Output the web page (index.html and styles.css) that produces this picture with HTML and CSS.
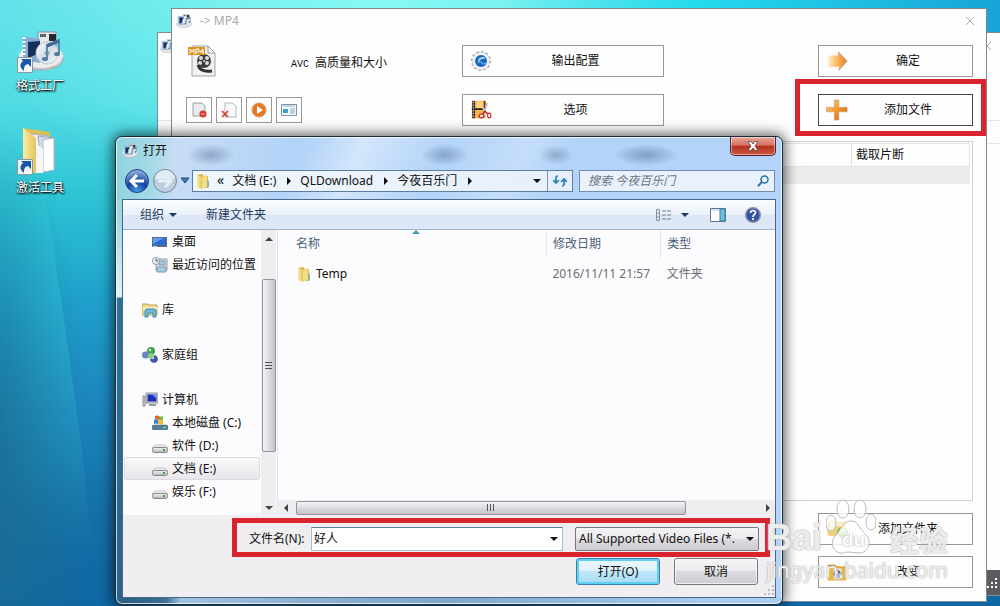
FILE: index.html
```html
<!DOCTYPE html>
<html lang="zh-CN">
<head>
<meta charset="utf-8">
<title>打开</title>
<link rel="stylesheet" href="styles.css">
</head>
<body>
<svg class="defs" aria-hidden="true">
  <defs>
    <linearGradient id="gOrange" x1="0" y1="0" x2="1" y2="1"><stop offset="0" stop-color="#ffd28a"/><stop offset=".6" stop-color="#ee8a1e"/><stop offset="1" stop-color="#b8641c"/></linearGradient>
    <linearGradient id="gArrow" x1="0" y1="0" x2="1" y2="0"><stop offset="0" stop-color="#fff0dc"/><stop offset=".45" stop-color="#ffbb62"/><stop offset="1" stop-color="#e27a18"/></linearGradient>
    <linearGradient id="gFolder" x1="0" y1="0" x2="1" y2="0"><stop offset="0" stop-color="#f9eda5"/><stop offset="1" stop-color="#e3c55a"/></linearGradient>
    <linearGradient id="gDisc" x1="0" y1="0" x2="1" y2="1"><stop offset="0" stop-color="#fff"/><stop offset=".5" stop-color="#d3dbe3"/><stop offset="1" stop-color="#f8fafb"/></linearGradient>
    <linearGradient id="gDrive" x1="0" y1="0" x2="0" y2="1"><stop offset="0" stop-color="#f4f4f4"/><stop offset="1" stop-color="#b4b4b4"/></linearGradient>
  </defs>
  <symbol id="factory" viewBox="0 0 46 40">
    <ellipse cx="23" cy="28" rx="22" ry="11" fill="#c4c6ca" stroke="#a8abb0"/>
    <ellipse cx="23" cy="25" rx="22" ry="12" fill="#ebebec"/>
    <path d="M20 1h18v14H20z" fill="#e6e9eb" stroke="#8a9096"/><path d="M31 3h7v7h-7z" fill="#22282e"/><path d="M22 3h6v3h-6z" fill="#5b636b"/>
    <path d="M5 5l17 3v24L5 29z" fill="#86acd4"/><path d="M10 11l12-1v12l-12 5z" fill="#16305a"/>
    <path d="M6 6v24" stroke="#fff" stroke-width="3" stroke-dasharray="2 2"/>
    <circle cx="29" cy="22" r="11" fill="url(#gDisc)" stroke="#c0c8d0"/><circle cx="29" cy="22" r="2.500" fill="#9aa8b5"/>
    <path d="M29 27V14l12-5v13" fill="none" stroke="#6286ac" stroke-width="2"/><path d="M29 15l12-5" stroke="#436c99" stroke-width="3"/><ellipse cx="27" cy="28" rx="3" ry="2" fill="#4e7aa8"/><ellipse cx="39" cy="23" rx="3" ry="2" fill="#4e7aa8"/>
    <circle cx="35" cy="36" r="1" fill="#c8b140"/>
  </symbol>
  <symbol id="shortcut" viewBox="0 0 16 16"><path d="M.5.5h15v15H.5z" fill="#f4f6f8" stroke="#8a98a5"/><path d="M6 2h8v8l-3-3c-4 1-4 4-4 7-4-3-5-7-1-10l-2-2z" fill="#1857ab"/></symbol>
  <symbol id="folder" viewBox="0 0 16 16"><path d="M2 2l5-1 2 2h4v12H7z" fill="#d9b94e"/><path d="M2 2l5 2v12l-5-2z" fill="url(#gFolder)"/><path d="M7 4l5-2v12l-5 2z" fill="#f3dd83"/><path d="M12 7l2 1v6l-2 1z" fill="#8fb6a0"/></symbol>
  <symbol id="drive" viewBox="0 0 16 16"><path d="M3 7h10l3 3H0z" fill="#ececec" stroke="#b0b0b0" stroke-width=".6"/><rect x=".5" y="9.500" width="15" height="5" rx="2" fill="url(#gDrive)" stroke="#858585"/><path d="M11 11h2v2h-2z" fill="#3ca34a"/></symbol>
</svg>

<div class="desktop">
  <svg class="beam" viewBox="0 0 180 606" preserveAspectRatio="none" aria-hidden="true">
    <defs><linearGradient id="gBeam" x1="0" y1="0" x2="1" y2="0"><stop offset=".2" stop-color="#3fe6e6" stop-opacity="0"/><stop offset="1" stop-color="#3fe0ea" stop-opacity=".4"/></linearGradient>
    <linearGradient id="gFade" x1="0" y1="0" x2="0" y2="1"><stop offset=".1" stop-color="#fff" stop-opacity=".2"/><stop offset=".5" stop-color="#fff"/><stop offset=".92" stop-color="#fff" stop-opacity="0"/></linearGradient>
    <mask id="mBeam"><rect width="180" height="606" fill="url(#gFade)"/></mask></defs>
    <path d="M-30 60L22 60L46 200L64 320L82 450L98 606H20z" fill="url(#gBeam)" mask="url(#mBeam)"/>
  </svg>

  <nav class="shortcuts">
    <a class="shortcut" href="#"><span class="art"><svg class="big" viewBox="0 0 46 40"><use href="#factory"/></svg><svg class="link-mark"><use href="#shortcut"/></svg></span>格式工厂</a>
    <a class="shortcut" href="#"><span class="art"><svg class="big" viewBox="0 0 46 46"><path d="M5 0l27 4v36H12z" fill="#d8bf58"/><path d="M14 6l16 2v32l-12-2z" fill="#f3f3f6" stroke="#aeb2c0"/><path d="M20 8l16 2v32l-12 1z" fill="#d6d9ea" stroke="#a4a8ba"/><path d="M25 12l11-2v32l-11 2z" fill="#fff" stroke="#b4b8c8"/><path d="M5 0l13 10v36L5 38z" fill="url(#gFolder)"/><path d="M18 15l7 6v24l-7 0z" fill="#f6f6f8"/></svg><svg class="link-mark"><use href="#shortcut"/></svg></span>激活工具</a>
  </nav>

  <div class="back-window">
    <div class="back-title"><svg class="i16"><use href="#factory"/></svg><span class="cross"></span></div>
    <div class="back-band"></div>
    <div class="back-status"><svg class="grip" viewBox="0 0 10 10"><path d="M8 0h2v2H8zM8 4h2v2H8zM8 8h2v2H8zM4 4h2v2H4zM4 8h2v2H4zM0 8h2v2H0z" fill="#fff"/></svg></div>
  </div>

  <section class="main-window">
    <header class="main-title"><svg class="i16"><use href="#factory"/></svg><span>-&gt; MP4</span><button class="cross" aria-label="关闭"></button></header>
    <div class="options">
      <div class="profile">
        <svg class="mp4" viewBox="0 0 28 32"><path d="M4 1h16l7 7v23H4z" fill="#f1f1f2" stroke="#a3a3a6"/><path d="M20 1v7h7z" fill="#fff" stroke="#999"/><circle cx="16" cy="16" r="7" fill="#3d3d40"/><g fill="#ddd"><circle cx="13" cy="13" r="2"/><circle cx="19" cy="13" r="2"/><circle cx="12" cy="18" r="2"/><circle cx="19" cy="18" r="2"/><circle cx="16" cy="16" r="1"/></g><path d="M10 20c2 6 7 7 14 6" fill="none" stroke="#333" stroke-width="3"/><path d="M0 2h17v8H0z" fill="#d9941f"/><path d="M2 9V4l2 3 2-3v5M8 9V4h3v3H8M15 9V4l-3 3h4" fill="none" stroke="#fff"/></svg>
        <span class="profile-name"><span class="latin">AVC </span>高质量和大小</span>
      </div>
      <button class="tile"><svg viewBox="0 0 24 24"><circle cx="12" cy="12" r="10" fill="#eceef0" stroke="#a3a8ae" stroke-width="2" stroke-dasharray="2.600 2.600"/><circle cx="12" cy="12" r="9.500" fill="#f0f1f2" stroke="#c9cccf" stroke-width=".6"/><circle cx="12" cy="12" r="6.500" fill="#1766b9"/><path d="M16 8c-6-2-9 3-6 7 0-4 2-6 6-5" fill="#9fd0f6"/><path d="M12 12c0 3 3 4 5 2" fill="none" stroke="#5fa9e4" stroke-width="1.500"/></svg><span>输出配置</span></button>
      <span></span>
      <button class="tile"><svg viewBox="0 0 24 24"><path d="M2 6h11V2l10 10-9 10v-4L2 19z" fill="url(#gArrow)"/><path d="M13 2l10 10-9 10" fill="none" stroke="#c6a58a" stroke-width="1.200"/></svg><span>确定</span></button>
      <div class="tools">
        <button aria-label="移除"><svg viewBox="0 0 16 16"><path d="M2 1h9l3 3v10H2z" fill="#e9eaec" stroke="#9c9fa3"/><circle cx="12" cy="12" r="3.600" fill="#d33e35"/><path d="M10 12h4" stroke="#eeb0a8"/></svg></button>
        <button aria-label="清空"><svg viewBox="0 0 16 16"><path d="M4 1h7l4 3v11H4z" fill="#fafafa" stroke="#b4b7ba"/><path d="M1 9l6 6M7 9l-6 6" stroke="#cf3a2c" stroke-width="1.600"/></svg></button>
        <button aria-label="播放"><svg viewBox="0 0 16 16"><circle cx="8" cy="8" r="7" fill="#e9771d" stroke="#c9a083"/><path d="M6 4l6 4-6 4z" fill="#fff"/></svg></button>
        <button aria-label="信息"><svg viewBox="0 0 16 16"><path d="M.5 2.500h15v11H.5z" fill="#f5f9fb" stroke="#7894a6"/><path d="M2 4h12" stroke="#9bb0bd"/><path d="M2 7h5v4H2z" fill="#3ba3cc"/><path d="M9 7h5M9 9h5M9 11h5" stroke="#93a7b4"/></svg></button>
      </div>
      <button class="tile"><svg viewBox="0 0 24 24"><path d="M2 2h15v19H2z" fill="#f6b448"/><path d="M7 3h7v7H7z" fill="#fbd183"/><path d="M4 2v19" stroke="#2f2927" stroke-width="3"/><path d="M16 2v9" stroke="#5a4030" stroke-width="2"/><path d="M2 11h15" stroke="#2f2927" stroke-width="2"/><path d="M4 3v18" stroke="#fff" stroke-dasharray="1.500 1.500"/><path d="M19 4l-4 12M14 10l6 7" stroke="#c3c6cb" stroke-width="2"/><path d="M16 13l-2 4M16 13l4 4" stroke="#b02434" stroke-width="1.500"/><ellipse cx="12.500" cy="18.500" rx="2.500" ry="2" fill="#fff" stroke="#c72e3c" stroke-width="1.500"/><ellipse cx="21" cy="18" rx="1.800" ry="2.600" fill="#fff" stroke="#c72e3c" stroke-width="1.300"/></svg><span>选项</span></button>
      <span></span>
      <button class="tile active"><svg viewBox="0 0 24 24"><path d="M9 1h5v8h9v5h-9v9H9v-9H0V9h9z" fill="url(#gOrange)" stroke="#bfa38b" stroke-width=".7"/></svg><span>添加文件</span></button>
    </div>
    <div class="queue">
      <table class="queue-table">
        <thead><tr><th class="rest"></th><th>截取片断</th></tr></thead>
        <tbody><tr><td></td><td></td></tr></tbody>
      </table>
    </div>
    <div class="side-actions">
      <button class="tile"><svg viewBox="0 0 24 24"><path d="M2 3h8l2 2h10v14H2z" fill="#eac05c"/><path d="M5 5h15v8H5z" fill="#fbedc6"/><path d="M1 9h21v10H2z" fill="#f2cf79"/><circle cx="18" cy="16" r="6" fill="#61ad48"/><path d="M14 16c2-4 5-4 7-1M20 12v4h-4" fill="none" stroke="#e2f5d5" stroke-width="1.500"/></svg><span>添加文件夹</span></button>
      <button class="tile"><svg viewBox="0 0 24 24"><path d="M2 4h8l2 2h10v15H2z" fill="#cf8b14"/><path d="M2 7h20v14H2z" fill="#f0b53a"/><path d="M8 8h9v12H8z" fill="#dedfe2"/><circle cx="12" cy="14" r="4" fill="#565a60"/><circle cx="15" cy="16" r="3" fill="#a9c1d6"/><path d="M10 11h3v3h-3z" fill="#fff"/></svg><span>改变</span></button>
    </div>
    <div class="mark mark-add"></div>
  </section>

  <section class="dialog" role="dialog" aria-label="打开">
    <header class="dialog-title"><svg class="i16"><use href="#factory"/></svg><h1>打开</h1>
      <button class="close" aria-label="关闭"><svg viewBox="0 0 12 10"><path d="M1 .5h3l2 2.500L8 .5h3L8 5l3 4.500H8L6 7 4 9.500H1L4 5z" fill="#fff" stroke="#5a4348" stroke-width=".8"/></svg></button></header>
    <div class="nav">
      <div class="history">
        <button aria-label="后退"><svg viewBox="0 0 26 26"><defs><radialGradient id="gBack" cx=".5" cy="1" r=".9"><stop offset="0" stop-color="#4aa8ee"/><stop offset=".55" stop-color="#1440a0"/><stop offset="1" stop-color="#7fa6dc"/></radialGradient></defs><circle cx="13" cy="13" r="11.500" fill="url(#gBack)" stroke="#23407a"/><path d="M20 13H8M13 7l-6 6 6 6" fill="none" stroke="#fff" stroke-width="3"/></svg></button>
        <button aria-label="前进"><svg viewBox="0 0 26 26"><circle cx="13" cy="13" r="11.500" fill="#bccddd" stroke="#71879c"/><path d="M3 11a10 9 0 0 1 20 0z" fill="#e2eaf2"/><path d="M6 13h12M13 7l6 6-6 6" fill="none" stroke="#e6edf4" stroke-width="3"/></svg></button>
        <button aria-label="历史记录"><svg class="recent" viewBox="0 0 10 8"><path d="M1 1h8L5 6z" fill="#3b7cc4" stroke="#234a7a"/></svg></button>
      </div>
      <div class="address">
        <svg class="i16"><use href="#folder"/></svg>
        <span class="chev">«</span><button>文档 (E:)</button><i class="tri right"></i><button>QLDownload</button><i class="tri right"></i><button>今夜百乐门</button><i class="tri right"></i>
        <button class="drop" aria-label="展开"><i class="tri down"></i></button>
        <button class="refresh" aria-label="刷新"><svg viewBox="0 0 14 12"><path d="M5 1C2 1 3 4 3 7M0 5l3 3 3-3M9 11c3 0 2-3 2-6M8 7l3-3 3 3" fill="none" stroke="#2a7fae" stroke-width="1.700"/></svg></button>
      </div>
      <label class="search"><input type="text" aria-label="搜索" placeholder="搜索 今夜百乐门"><svg viewBox="0 0 12 12"><circle cx="7.500" cy="4.500" r="3.500" fill="#eaf5fc" stroke="#2a6fa5" stroke-width="1.500"/><path d="M5 7l-4 4" stroke="#2a6fa5" stroke-width="2"/></svg></label>
    </div>

    <div class="client">
      <div class="toolbar">
        <button>组织 <i class="tri down"></i></button><button>新建文件夹</button>
        <button class="view" aria-label="更改视图"><svg viewBox="0 0 16 12"><path d="M.5.5h3v11h-3zM.5 4h3M.5 8h3" fill="none" stroke="#8a929c"/><path d="M6 2h4M11 2h4M6 6h4M11 6h4M6 10h4M11 10h4" stroke="#6e7b8c"/></svg><i class="tri down"></i></button>
        <button aria-label="预览窗格"><svg viewBox="0 0 16 14"><path d="M.5.5h15v13H.5z" fill="#fff" stroke="#5b7893"/><path d="M1 2h9" stroke="#b6cad9"/><path d="M10 1h5v12h-5z" fill="#6fc0e0" stroke="#3d7da4"/></svg></button>
        <button aria-label="帮助"><svg viewBox="0 0 16 16"><circle cx="8" cy="8" r="7.300" fill="#3653a8" stroke="#8992a8" stroke-width="1.400"/><path d="M5.500 6c0-3.500 5-3 5-.3C10.500 7.500 8 7.500 8 10M8 11v2" fill="none" stroke="#fff" stroke-width="1.700"/></svg></button>
      </div>
      <div class="panes">
        <ul class="tree">
          <li class="sub"><svg class="i16"><path d="M0 3h15v10H0z" fill="#5a6c80"/><path d="M1 4h13v7H1z" fill="#286bd0"/><path d="M1 4h11L1 10z" fill="#5d9cf0"/><path d="M1 12h4v1H1z" fill="#8fe0ff"/></svg>桌面</li>
          <li class="sub"><svg class="i16"><path d="M4 2h11v11H4z" fill="#e2e5ea" stroke="#9298a2"/><path d="M7 4h6v4H7zM5 10h9v5H5z" fill="#9fd0e4" stroke="#8295a4"/><circle cx="4" cy="4" r="3.500" fill="#eef2f5" stroke="#8e98a2"/><path d="M4 2v2h2" fill="none" stroke="#456"/></svg>最近访问的位置</li>
          <li class="gap"><svg class="i16"><path d="M0 2h6l1 1h8v10H0z" fill="#efd98a" stroke="#b7a558"/><path d="M1 5h14v3H1z" fill="#f9efbd"/><path d="M3 15V9q0-2 2-2h7q2 0 2 2v6h-3v-4H6v4z" fill="#6cb9dd" stroke="#4689ad"/></svg>库</li>
          <li class="gap"><svg class="i16"><circle cx="9" cy="4" r="4" fill="#3fa14c"/><circle cx="3.500" cy="8" r="3.500" fill="#6a86c4"/><circle cx="12" cy="12" r="3.800" fill="#3c55a6"/><circle cx="9" cy="9" r="3" fill="#86d27a"/><circle cx="8" cy="3" r="1.300" fill="#c3efb8"/><circle cx="11" cy="11" r="1.200" fill="#b5c6ee"/></svg>家庭组</li>
          <li class="gap"><svg class="i16"><path d="M1 4h2v10H1z" fill="#dfe6dd" stroke="#7f8a80"/><path d="M4 1h12v10H4z" fill="#cfd3da" stroke="#8c929c"/><path d="M5.500 2.500h9v7h-9z" fill="#1d2fb4"/><path d="M10 2.500h4.500v4z" fill="#6f9cf4"/><path d="M7 12h7v2H7z" fill="#9aa0a8"/></svg>计算机</li>
          <li class="sub"><svg class="i16"><path d="M2 9h12l2 2H0z" fill="#ccd4da"/><rect y="10" width="16" height="5" rx="1" fill="#587c93"/><path d="M11 12h3v1h-3z" fill="#6f6"/><path d="M3 1q2-1 4 0v4q-2-1-4 0z" fill="#e0632e"/><path d="M7 1q2 1 4 0v4q-2 1-4 0z" fill="#7dba3c"/><path d="M2 5q2-1 4 0v4q-2-1-4 0z" fill="#3e7fd0"/><path d="M6 5q3 1 5 0v4q-3 1-5 0z" fill="#efbd32"/></svg>本地磁盘 (C:)</li>
          <li class="sub"><svg class="i16"><use href="#drive"/></svg>软件 (D:)</li>
          <li class="sub selected"><svg class="i16"><use href="#drive"/></svg>文档 (E:)</li>
          <li class="sub"><svg class="i16"><use href="#drive"/></svg>娱乐 (F:)</li>
        </ul>
        <div class="scroll vertical"><i class="tri up"></i><span class="space"></span><span class="thumb"><i></i><i></i><i></i></span><span class="space end"></span><i class="tri down"></i></div>
        <div class="files">
          <table class="list">
            <thead><tr><th class="name">名称<i class="sort"></i></th><th class="date">修改日期</th><th class="type">类型</th></tr></thead>
            <tbody><tr><td><span class="file"><svg class="i16"><use href="#folder"/></svg>Temp</span></td><td>2016/11/11 21:57</td><td>文件夹</td></tr></tbody>
          </table>
          <div class="scroll horizontal"><i class="tri left"></i><span class="thumb"><i></i><i></i><i></i></span><span class="space"></span><i class="tri right"></i></div>
        </div>
      </div>
      <form class="footer">
        <div class="filename"><label for="fname">文件名(N):</label>
          <span class="combo"><input id="fname" type="text" value="好人"><i class="tri down"></i></span>
          <span class="filter"><select aria-label="文件类型"><option>All Supported Video Files (*.</option></select><i class="tri down"></i></span></div>
        <div class="buttons"><button type="button" class="default">打开(O)</button><button type="button">取消</button></div>
        <svg class="grip" viewBox="0 0 10 10"><path d="M8 0h2v2H8zM8 4h2v2H8zM8 8h2v2H8zM4 4h2v2H4zM4 8h2v2H4zM0 8h2v2H0z" fill="#bbb"/></svg>
        <div class="mark mark-name"></div>
      </form>
    </div>
  </section>

  <div class="watermark">
    <div class="brand"><span>Bai</span><svg viewBox="0 0 50 56"><g fill="#fff" fill-opacity=".8" stroke="#bbb"><ellipse cx="17" cy="10" rx="6" ry="9"/><ellipse cx="34" cy="10" rx="6" ry="9"/><ellipse cx="5" cy="24" rx="5" ry="8"/><ellipse cx="45" cy="23" rx="5" ry="8"/><path d="M25 22c8 0 8 8 15 14 6 6 3 18-7 18-4 0-12-2-16 0-9 1-14-9-8-17 6-6 8-15 16-15z"/></g></svg><b>du</b><span class="cn">经验</span></div>
    <div class="site">jingyan.baidu.com</div>
  </div>
</div>
</body>
</html>
```
FILE: styles.css
```css
* { box-sizing: border-box; }
html, body { height: 100%; margin: 0; }
body { font: 12px/16px "Noto Sans", "Noto Sans CJK SC", sans-serif; color: #111; }
button, input, select { font: inherit; color: inherit; }
button { padding: 0; border: 0; background: none; }
svg { display: block; flex: none; }
.defs { position: absolute; width: 0; height: 0; }
.i16 { width: 16px; height: 16px; }

.tri { display: block; flex: none; width: 0; height: 0; border: 4px solid transparent; }
.tri.down { border-top-color: currentColor; border-bottom-width: 0; }
.tri.up { border-bottom-color: currentColor; border-top-width: 0; }
.tri.right { border-left-color: currentColor; border-right-width: 0; }
.tri.left { border-right-color: currentColor; border-left-width: 0; }

.desktop {
  position: relative; height: 100%; min-height: 560px; overflow: hidden;
  background:
    linear-gradient(90deg, transparent 50%, #24daee 70%, #18a4d6 100%) top / 100% 130px no-repeat,
    radial-gradient(ellipse 90px 360px at 0 480px, rgba(28,110,140,.7), transparent),
    radial-gradient(ellipse 400px 220px at 380px 0, #86faf4, transparent),
    linear-gradient(#62e0e8 0, #52dce4 17%, #2cc2d4 33%, #1f9fcb 50%, #1c86be 66%, #156fa8 84%, #0f67a3 100%);
}
.beam { position: absolute; left: 0; top: 0; width: 180px; height: 100%; }

.shortcuts { position: absolute; left: 0; top: 30px; width: 80px; display: flex; flex-direction: column; gap: 34px; }
.shortcut { display: flex; flex-direction: column; align-items: center; gap: 2px; color: #fff; text-decoration: none; text-shadow: 0 1px 2px #000, 1px 1px 2px #000; }
.art { position: relative; width: 48px; height: 46px; }
.shortcut + .shortcut .art { height: 50px; }
.big { width: 46px; height: 42px; margin-left: 2px; }
.shortcut + .shortcut .big { width: 46px; height: 46px; }
.link-mark { position: absolute; left: 1px; bottom: 3px; width: 16px; height: 16px; }

.back-window { position: absolute; left: 157px; right: -10px; top: 32px; bottom: 10px; display: flex; flex-direction: column; background: #fdfdfd; border: 1px solid #7b8c94; }
.back-title { display: flex; align-items: center; justify-content: space-between; height: 26px; padding: 0 18px 0 2px; }
.back-band { margin-top: 61px; height: 24px; border: solid #e4e4e4; border-width: 1px 0; }
.back-status { margin-top: auto; height: 25px; display: flex; align-items: center; justify-content: flex-end; padding-right: 12px; background: #5c5c60; }
.grip { width: 10px; height: 10px; }
.cross { width: 8px; height: 8px; background: linear-gradient(45deg, transparent 44%, #aaa 44% 56%, transparent 56%), linear-gradient(-45deg, transparent 44%, #aaa 44% 56%, transparent 56%); }

.main-window { position: absolute; left: 171px; right: 13px; top: 8px; bottom: 4px; display: flex; flex-direction: column; background: #fefefe; border: 1px solid #7d8a90; }
.main-title { display: flex; align-items: center; gap: 8px; height: 24px; padding: 0 12px 0 4px; color: #aaa; }
.main-title .cross { margin-left: auto; }
.options { display: grid; grid-template-columns: 276fr 202fr 154fr 155fr; row-gap: 17px; padding: 12px 13px 0 14px; }
.profile { display: flex; align-items: center; padding-left: 2px; }
.mp4 { width: 28px; height: 32px; }
.profile-name { flex: 1; padding-top: 4px; text-align: center; white-space: pre; }
.latin { font: 10px "Liberation Mono", monospace; }
.tile { display: flex; align-items: center; height: 32px; padding-left: 7px; background: #fefefe; border: 1px solid #979797; }
.tile svg { width: 22px; height: 24px; }
.tile span { flex: 1; text-align: center; padding-right: 4px; }
.tile.active { border-color: #444; }
.tools { display: flex; align-items: center; gap: 4px; }
.tools button { display: grid; place-items: center; width: 26px; height: 26px; background: #fefefe; border: 1px solid #999; }
.tools svg { width: 16px; height: 16px; }
.queue { flex: 1; margin: 15px 13px 12px 14px; padding: 1px 2px; border: 1px solid #d0d0d0; }
.queue-table { width: 100%; border-collapse: collapse; table-layout: fixed; }
.queue-table th { width: 118px; height: 23px; padding: 0 4px; border: 1px solid #e2e2e2; text-align: left; font-weight: 400; }
.queue-table .rest { width: auto; }
.queue-table td { height: 17px; padding: 0; background: #eeebee; }
.side-actions { display: grid; grid-template-columns: 632fr 155fr; row-gap: 11px; padding: 0 13px 13px 14px; }
.side-actions .tile { grid-column: 2; }
.mark { position: absolute; border: 5px solid #d9242d; pointer-events: none; }
.mark-add { right: 0; top: 70px; width: 191px; height: 57px; }

.dialog {
  position: absolute; left: 115px; right: 217px; top: 136px; bottom: 1px;
  display: flex; flex-direction: column; padding: 0 6px 6px;
  border: 1px solid #1b2a36; border-radius: 7px;
  box-shadow: inset 0 0 0 1px rgba(255,255,255,.75), 0 0 13px 2px rgba(0,0,0,.65);
  background:
    radial-gradient(ellipse 24px 11px at 95px 18px, rgba(80,105,145,.45), transparent),
    radial-gradient(ellipse 24px 11px at 329px 18px, rgba(80,105,145,.45), transparent),
    radial-gradient(ellipse 17px 10px at 440px 18px, rgba(80,105,145,.4), transparent),
    radial-gradient(ellipse 32px 11px at 530px 18px, rgba(80,105,145,.5), transparent),
    linear-gradient(90deg, #8fd3df 0, #a5d9e6 35px, #c8dcf4 60px, transparent 170px) top / 100% 63px no-repeat,
    linear-gradient(115deg, transparent 28%, rgba(225,238,253,.7) 36%, transparent 48%, rgba(215,232,252,.5) 60%, transparent 66%) top / 100% 63px no-repeat,
    linear-gradient(#86cfdc 0, #a7d9e6 90px, #e2f3f8 160px, #2f7096 161px, #2c6289 100%) left / 7px 100% no-repeat,
    linear-gradient(90deg, #285b82 0, #3d6f96 50px, #9fc2df 65px, #8bb0cd 200px, #7fa8ca 50%, #a9cdec 90%) bottom / 100% 7px no-repeat,
    #b3d3f8;
}
.dialog-title { display: flex; align-items: flex-start; height: 29px; }
.dialog-title .i16 { margin: 6px 5px 0 0; }
.dialog-title h1 { margin: 6px 0 0; font: inherit; }
.close { display: grid; place-items: center; width: 46px; height: 19px; margin-left: auto; border: 1px solid #562431; border-top: 0; border-radius: 0 0 5px 5px; background: linear-gradient(#e7a99f, #d4705f 46%, #b4301f 50%, #ce5842); box-shadow: inset 0 0 0 1px rgba(255,255,255,.45); }
.close svg { width: 12px; height: 10px; }
.nav { display: grid; grid-template-columns: 70px minmax(0, 379fr) minmax(0, 198fr); column-gap: 6px; align-items: center; height: 30px; margin-bottom: 3px; padding-right: 1px; }
.history { display: flex; align-items: center; gap: 2px; margin-right: -6px; padding-left: 2px; }
.history svg { width: 26px; height: 26px; }
.history .recent { width: 10px; height: 8px; }
.address { display: flex; align-items: center; height: 22px; margin-left: -6px; padding-left: 2px; background: linear-gradient(90deg, #f0f6fd, #e6effb); border: 1px solid #5c7da4; white-space: nowrap; }
.address > .tri { margin: 0 9px 0 11px; }
.address .chev { margin: 0 8px 3px 6px; font-size: 14px; }
.address .drop { margin-left: auto; padding-right: 6px; }
.refresh { align-self: stretch; width: 25px; display: grid; place-items: center; border-left: 1px solid #7c94b2; }
.refresh svg { width: 14px; height: 12px; }
.search { display: flex; align-items: center; height: 22px; padding: 0 5px 0 8px; background: #e9f2fc; border: 1px solid #6f8db2; }
.search input { flex: 1; min-width: 0; padding: 0; border: 0; background: none; outline: 0; font-style: italic; }
.search input::placeholder { color: #6c7280; opacity: 1; }
.search svg { width: 12px; height: 12px; }

.client { flex: 1; min-height: 0; display: flex; flex-direction: column; border: 1px solid #47688a; background: #fcfbfd; }
.toolbar { display: flex; align-items: center; height: 30px; padding: 0 14px 0 17px; color: #1e395b; background: linear-gradient(#fbfdff, #eaf1fa 50%, #dde6f5 52%, #dde8f6); border-bottom: 1px solid #a0b4ce; }
.toolbar button { display: flex; align-items: center; gap: 5px; }
.toolbar button + button { margin-left: 29px; }
.toolbar .view { margin-left: auto; gap: 9px; }
.toolbar .view + button { margin-left: 21px; }
.toolbar button:last-child { margin-left: 19px; }
.toolbar svg { width: 16px; height: 16px; }
.panes { flex: 1; min-height: 0; display: flex; }
.tree { flex: none; width: 138px; margin: 0; padding: 0 1px; list-style: none; overflow: hidden; white-space: nowrap; }
.tree li { display: flex; align-items: center; gap: 4px; height: 23px; padding-left: 17px; border: 1px solid transparent; }
.tree .sub { padding-left: 27px; }
.tree .gap { margin-top: 22px; }
.tree .selected { border-color: #dcdadd; border-radius: 3px; background: linear-gradient(#f9f8fa, #e8e6ea); }
.scroll { display: flex; align-items: center; background: #efedf0; color: #444; }
.scroll.vertical { flex: none; flex-direction: column; width: 15px; padding: 7px 0 5px; }
.scroll.vertical .space { flex: 38 1 0; }
.scroll.vertical .space.end { flex-grow: 54; }
.thumb { display: flex; align-items: center; justify-content: center; gap: 1px; border: 1px solid #96949a; border-radius: 2px; }
.vertical .thumb { flex: 172 1 0; flex-direction: column; width: 14px; background: linear-gradient(90deg, #f4f3f5, #dddbdf 50%, #c5c3c9); }
.vertical .thumb i { width: 7px; height: 2px; border-top: 1px solid #555; }
.horizontal .thumb { flex: 388 1 0; height: 14px; background: linear-gradient(#f4f3f5, #dddbdf 50%, #c5c3c9); }
.horizontal .thumb i { width: 2px; height: 7px; border-left: 1px solid #555; }
.horizontal .space { flex: 80 1 0; }
.scroll.horizontal { height: 15px; margin-top: auto; padding: 0 5px 0 6px; }
.horizontal .tri.left { margin-right: 8px; }
.files { flex: 1; min-width: 0; display: flex; flex-direction: column; margin-left: 1px; border-left: 1px solid #e0e4ec; }
.list { width: 100%; border-collapse: collapse; table-layout: fixed; white-space: nowrap; }
.list th { position: relative; height: 28px; padding: 0 6px; text-align: left; font-weight: 400; color: #4c607a; border-right: 1px solid #e2e8f0; }
.list th:last-child { border: 0; }
.list th:first-child { padding-left: 18px; }
.list .name { width: 54%; }
.list .date { width: 23%; }
.list td { height: 32px; padding: 0 6px; color: #6d6d70; }
.list td:first-child { padding-left: 18px; color: #111; }
.file { display: flex; align-items: center; gap: 4px; }
.sort { position: absolute; left: 50%; top: 0; border: 4px solid transparent; border-top: 0; border-bottom-color: #4b9ab8; }

.footer { position: relative; display: flex; flex-direction: column; gap: 7px; padding: 12px 16px 12px 126px; background: #f0eef0; }
.filename { display: grid; grid-template-columns: 62px minmax(0, 252fr) minmax(0, 196fr); align-items: center; }
.filename label { white-space: nowrap; }
.combo { display: flex; align-items: center; height: 24px; padding-right: 4px; background: #fff; border: 1px solid #a4bfd2; border-top-color: #5d7f99; }
.combo input { flex: 1; min-width: 0; padding: 0 2px; border: 0; background: none; outline: 0; }
.filter { position: relative; height: 24px; margin-left: 12px; }
.filter select { width: 100%; height: 24px; padding: 0 18px 0 3px; appearance: none; border: 1px solid #77777c; border-radius: 2px; background: linear-gradient(#f4f3f5, #eae9eb 50%, #dcdade 51%, #cfcdd1); }
.filter .tri { position: absolute; right: 5px; top: 10px; }
.buttons { display: flex; justify-content: flex-end; gap: 14px; padding-right: 1px; }
.buttons button { width: 84px; height: 27px; border: 1px solid #77777c; border-radius: 3px; background: linear-gradient(#f6f5f7, #ebeaec 48%, #dcdade 50%, #cfcdd1); box-shadow: inset 0 0 0 1px rgba(255,255,255,.7); }
.buttons .default { border-color: #3c7fb1; background: linear-gradient(#edf8fd, #dcf1fb 48%, #bfe6f8 50%, #a6dbf4); box-shadow: inset 0 0 0 2px #5fd0f0; }
.footer .grip { position: absolute; right: 1px; bottom: 2px; }
.mark-name { left: 109px; right: 5px; top: 3px; height: 39px; }

.watermark { position: absolute; right: 52px; bottom: 22px; width: 182px; color: rgba(255,255,255,.8); text-shadow: 0 0 1px #aaa, 0 0 2px #bbb; pointer-events: none; }
.brand { position: relative; display: flex; align-items: flex-end; height: 58px; font: bold 36px/36px "Liberation Sans", sans-serif; }
.brand svg { width: 50px; height: 58px; margin: 0 4px; }
.brand b { position: absolute; left: 76px; bottom: 6px; font-size: 19px; line-height: 20px; color: #fff; }
.brand .cn { margin-left: auto; font: bold 29px/34px "Noto Sans CJK SC", sans-serif; }
.site { font: 21px/28px "Noto Sans", sans-serif; white-space: nowrap; }
```
